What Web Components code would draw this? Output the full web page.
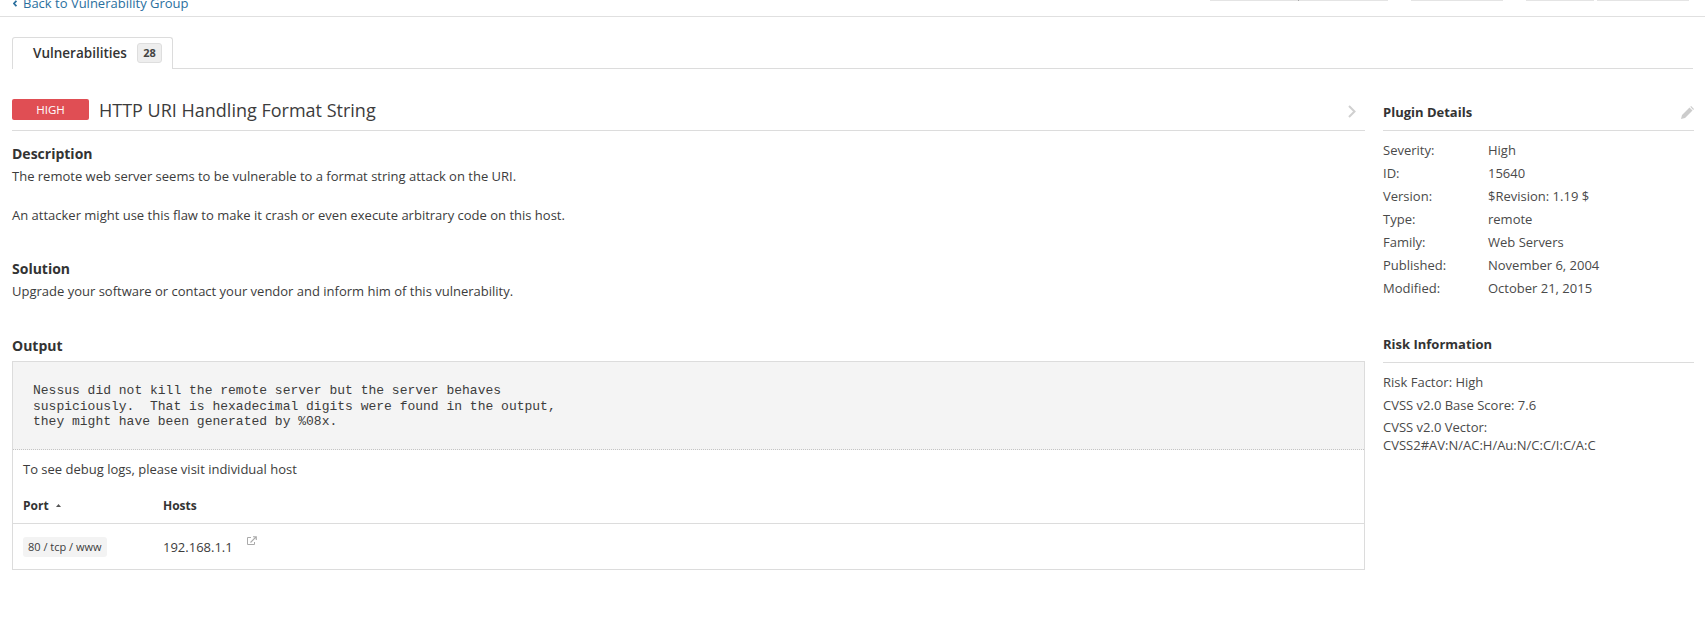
<!DOCTYPE html>
<html><head><meta charset="utf-8">
<style>
html,body{margin:0;padding:0;background:#fff;font-family:"Open Sans",sans-serif;font-size:13px;color:#3c3c3c;overflow:hidden}
</style></head>
<body>
<top-bar>
  <a slot="back">Back to Vulnerability Group</a>
</top-bar>
<tab-strip label="Vulnerabilities" count="28"></tab-strip>
<main-layout>
  <div slot="main">
    <vuln-title severity="HIGH">HTTP URI Handling Format String</vuln-title>
    <text-section heading="Description" style="--top:13px;--bottom:34px"><div>The remote web server seems to be vulnerable to a format string attack on the URI.</div><div style="margin-top:19px">An attacker might use this flaw to make it crash or even execute arbitrary code on this host.</div></text-section>
    <text-section heading="Solution" style="--top:0px;--bottom:35px"><div>Upgrade your software or contact your vendor and inform him of this vulnerability.</div></text-section>
    <output-panel>
      <span slot="pre">Nessus did not kill the remote server but the server behaves
suspiciously.  That is hexadecimal digits were found in the output,
they might have been generated by %08x.</span>
    </output-panel>
  </div>
  <div slot="side">
    <side-panel heading="Plugin Details" edit>
      <detail-row label="Severity:">High</detail-row>
      <detail-row label="ID:">15640</detail-row>
      <detail-row label="Version:">$Revision: 1.19 $</detail-row>
      <detail-row label="Type:">remote</detail-row>
      <detail-row label="Family:">Web Servers</detail-row>
      <detail-row label="Published:">November 6, 2004</detail-row>
      <detail-row label="Modified:">October 21, 2015</detail-row>
    </side-panel>
    <side-panel heading="Risk Information" style="margin-top:25px">
      <detail-row>Risk Factor: High</detail-row>
      <detail-row>CVSS v2.0 Base Score: 7.6</detail-row>
      <detail-row wrap>CVSS v2.0 Vector:<br>CVSS2#AV:N/AC:H/Au:N/C:C/I:C/A:C</detail-row>
    </side-panel>
  </div>
</main-layout>
<script>
function def(name, html){
  customElements.define(name, class extends HTMLElement{
    connectedCallback(){
      if(this.shadowRoot) return;
      const r=this.attachShadow({mode:'open'});
      r.innerHTML=typeof html==='function'?html(this):html;
    }
  });
}
def('top-bar',`<style>
:host{display:flex;justify-content:space-between;height:17px;box-sizing:border-box;border-bottom:1px solid #e0e0e0;overflow:hidden;padding:0 16px 0 13px}
.back{display:flex;align-items:center;gap:6px;margin-top:-7px;height:20px;color:#2a6f9e;font-size:13px;white-space:nowrap}
.btns{display:flex;margin-right:0}
.b{height:1px;background:#e4e4e4}
</style>
<div class="back"><svg width="4" height="7" viewBox="0 0 4 7"><path d="M3.4.8.9 3.5l2.5 2.7" fill="none" stroke="#2a6f9e" stroke-width="1.8"/></svg><slot name="back"></slot></div>
<div class="btns">
<div class="b" style="width:88px"></div><div class="b" style="width:1px;background:#aaa;"></div><div class="b" style="width:89px;margin-right:23px"></div>
<div class="b" style="width:92px;margin-right:23px"></div>
<div class="b" style="width:68px;margin-right:3px"></div>
<div class="b" style="width:92px"></div></div>`);
def('tab-strip',t=>`<style>
:host{display:flex;height:52px;box-sizing:border-box;padding:20px 12px 0 12px;align-items:stretch}
.tab{box-sizing:border-box;width:161px;height:32px;border:1px solid #dcdcdc;border-bottom:0;border-radius:3px 3px 0 0;background:#fff;display:flex;align-items:center;padding:0 0 2px 20px;font-weight:600;font-size:13.5px;color:#333;position:relative;z-index:1}
.n{margin-left:10px;width:25px;height:20px;box-sizing:border-box;border:1px solid #dedede;border-radius:3px;background:#eee;font-size:11px;display:flex;align-items:center;justify-content:center;font-weight:700;color:#444}
.line{flex:1;border-bottom:1px solid #dcdcdc;height:31px}
</style><div class="tab">${t.getAttribute('label')}<span class="n">${t.getAttribute('count')}</span></div><div class="line"></div>`);
def('main-layout',`<style>
:host{display:grid;grid-template-columns:1353px 311px;column-gap:18px;padding:0 11px 0 12px}
</style><slot name="main"></slot><slot name="side"></slot>`);
def('vuln-title',t=>`<style>
:host{display:flex;align-items:center;height:62px;padding-top:20px;box-sizing:border-box;border-bottom:1px solid #dcdcdc;position:relative}
.sev{width:77px;height:21px;background:#e04e54;border-radius:2px;color:#fff;font-size:11.5px;display:flex;align-items:center;justify-content:center;margin-right:10px}
.t{font-size:18px;color:#3c3c3c;flex:1}
svg{margin:4px 9px 0 0}
</style><span class="sev">${t.getAttribute('severity')}</span><span class="t"><slot></slot></span><svg width="8" height="13" viewBox="0 0 8 13"><path d="M1 1l5.5 5.5L1 12" fill="none" stroke="#d0d0d0" stroke-width="2"/></svg>`);
def('text-section',t=>`<style>
:host{display:block;padding:var(--top) 0 var(--bottom) 0;line-height:20px;color:#3c3c3c}
h3{margin:0 0 2px;font-size:14px;font-weight:700;line-height:20px;color:#333}
</style><h3>${t.getAttribute('heading')}</h3><slot></slot>`);
def('output-panel',`<style>
:host{display:block}
h3{margin:0 0 5px;font-size:14px;font-weight:700;line-height:20px;color:#333}
.box{border:1px solid #dcdcdc;height:209px;box-sizing:border-box}
pre{margin:0;height:88px;box-sizing:border-box;background:#f4f4f4;border-bottom:1px dotted #c4c4c4;padding:21px 20px 0 20px;font:13px/15.5px "Liberation Mono",monospace;color:#3c3c3c}
.note{height:35px;padding:8px 10px 0;line-height:22px;box-sizing:border-box}
.head{display:flex;height:35px;align-items:center;box-sizing:border-box;border-bottom:1px solid #dcdcdc;font-weight:700;font-size:12px;padding:0 10px 2px;margin-top:4px;color:#333}
.port{width:140px;display:flex;gap:7px;align-items:center}
.row{display:flex;height:45px;align-items:center;padding:0 10px}
.tag{display:inline-block;background:#f3f3f3;border-radius:3px;font-size:11px;padding:0 5px;height:20px;line-height:20px}
.c1{width:140px;display:flex}
.ic{margin:-12px 0 0 14px}
</style><h3>Output</h3><div class="box"><pre><slot name="pre"></slot></pre><div class="note">To see debug logs, please visit individual host</div>
<div class="head"><span class="port">Port <svg width="5" height="3" viewBox="0 0 5 3"><path d="M2.5 0 5 3H0z" fill="#555"/></svg></span><span>Hosts</span></div>
<div class="row"><span class="c1"><span class="tag">80 / tcp / www</span></span><span>192.168.1.1</span><svg class="ic" width="10" height="10" viewBox="0 0 10 10"><path d="M7.5 6v2.5h-7v-7H4" fill="none" stroke="#aaa"/><path d="M3.5 6.5 9 1M6 .7h3.3V4" fill="none" stroke="#aaa" stroke-width="1.1"/></svg></div></div>`);
def('side-panel',t=>`<style>
:host{display:block}
.h{height:38px;box-sizing:border-box;border-bottom:1px solid #dcdcdc;display:flex;justify-content:space-between;align-items:center;font-size:13px;font-weight:700;color:#333}
.first{height:62px;padding-top:25px}
.body{padding-top:8px}
</style><div class="h ${t.hasAttribute('edit')?'first':''}"><span>${t.getAttribute('heading')}</span>${t.hasAttribute('edit')?'<svg width="13" height="13" viewBox="0 0 13 13"><path d="M0 13l1-4 7.5-7.5 3 3L4 12zM9.3.8l.8-.8 3 3-.9.9z" fill="#ccc"/></svg>':''}</div><div class="body"><slot></slot></div>`);
def('detail-row',t=>`<style>
:host{display:flex;line-height:${t.hasAttribute('wrap')?'18px':'23px'};${t.hasAttribute('wrap')?'margin-top:1px;':''}color:#4a4a4a}
.l{width:105px;flex:none}
</style>${t.hasAttribute('label')?`<span class="l">${t.getAttribute('label')}</span>`:''}<span><slot></slot></span>`);
</script>
</body></html>
